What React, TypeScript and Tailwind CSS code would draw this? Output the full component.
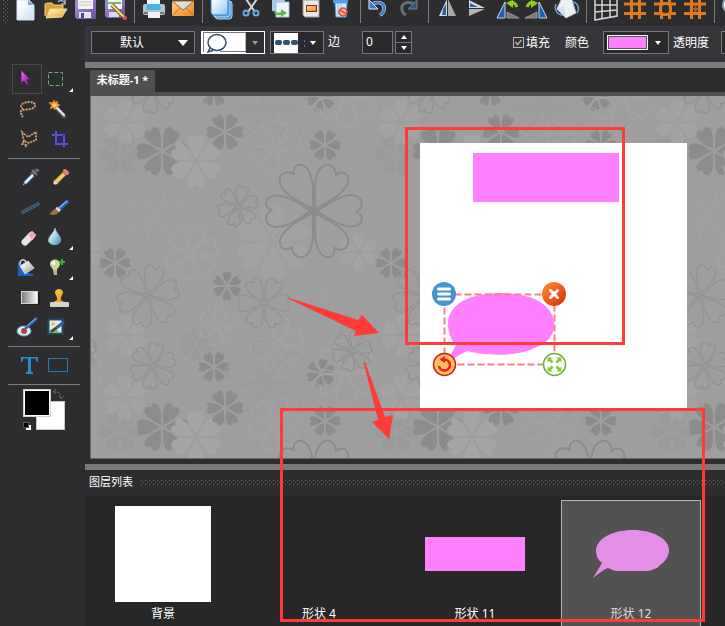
import { useState } from "react";
import type { ReactNode } from "react";

const FONT = "font-['Noto_Sans','Noto_Sans_CJK_SC',sans-serif]";

/* Gradients shared by all the icons */
function SharedDefs() {
  const ramps: [string, string, string][] = [
    ["paper", "#ffffff", "#c9dcf2"],
    ["folder", "#ffe9a8", "#dca23c"],
    ["floppy", "#9c86d0", "#6a4f9f"],
    ["silver", "#ffffff", "#8c8c8c"],
    ["sky", "#f4faff", "#8cc4f4"],
    ["orange", "#ffc070", "#e8852a"],
    ["red", "#ff7a2e", "#d42a08"],
    ["drop", "#f2fbff", "#3590b4"],
    ["stamp", "#ffc23e", "#e68a10"],
    ["purple", "#e05ae8", "#6d1080"],
  ];
  return (
    <svg className="absolute" width="0" height="0" aria-hidden="true">
      <defs>
        {ramps.map(([id, from, to]) => (
          <linearGradient key={id} id={id} x1="0" y1="0" x2="1" y2="1">
            <stop offset="0.2" stopColor={from} />
            <stop offset="1" stopColor={to} />
          </linearGradient>
        ))}
        <linearGradient id="ramp">
          <stop offset="0" stopColor="#777" />
          <stop offset="1" stopColor="#fff" />
        </linearGradient>
        <pattern id="grip" width="4" height="4" patternUnits="userSpaceOnUse">
          <rect width="1" height="1" fill="#626264" />
          <rect x="2" y="2" width="1" height="1" fill="#626264" />
        </pattern>
      </defs>
    </svg>
  );
}

/* === Top toolbar === */

const rotateLeft = (
  <>
    <path d="M4 18L12 2V18Z" fill="#1f5fb4" stroke="#c9d4e4" strokeWidth="1" />
    <path d="M14 18V12L26 18Z" fill="#777" stroke="#aaa" strokeWidth="0.8" />
    <path d="M24 7C22 2 18 1 16 4" fill="none" stroke="#8fcc1c" strokeWidth="3" />
    <path d="M13 3L20 0V8Z" fill="#8fcc1c" />
  </>
);

const hashBars = (
  <path
    d="M10.5 0V19M18.500 0V19M3 4H25M3 13.500H25"
    stroke="#e07a1e"
    strokeWidth="3"
    fill="none"
  />
);

const toolGroups: { label: string; icon: ReactNode }[][] = [
  [
    {
      label: "新建",
      icon: (
        <>
          <path d="M6 0H18L23 5V20H6Z" fill="url(#paper)" stroke="#d8e2ee" strokeWidth="1" />
          <path d="M17 0V5H23Z" fill="#7fa6d6" />
        </>
      ),
    },
    {
      label: "打开",
      icon: (
        <>
          <path d="M4 16V4L6 3H11L13 5H22V9" fill="#d9a13c" stroke="#f2cf7c" strokeWidth="1" />
          <path d="M5 18L9 9H26L21 17Z" fill="url(#folder)" stroke="#f6d78e" strokeWidth="1" />
          <path d="M17 2C19 0 22 0 24 3M24 0V4H20" fill="none" stroke="#a9b2bd" strokeWidth="1.5" />
        </>
      ),
    },
    {
      label: "保存",
      icon: (
        <>
          <path d="M4 0H25V19H6L4 17Z" fill="url(#floppy)" />
          <path d="M7 0H22V9H7Z" fill="#f5f5f5" />
          <path d="M8 2H21M8 5H21" stroke="#c4c4c4" />
          <path d="M8 12H20V18H8Z" fill="#e4e4ee" />
          <path d="M10 13H13V18H10Z" fill="#55408a" />
        </>
      ),
    },
    {
      label: "另存为",
      icon: (
        <>
          <path d="M4 0H24V18H6L4 16Z" fill="url(#floppy)" />
          <path d="M7 0H21V9H7Z" fill="#f5f5f5" />
          <path d="M7 3H20" stroke="#6fc05c" strokeWidth="2" />
          <path d="M8 12H18V17H8Z" fill="#dcdce8" />
          <path d="M11 5L24 18" stroke="#7b5c22" strokeWidth="4" />
          <path d="M11 5L24 18" stroke="#f6d98a" strokeWidth="2" />
          <circle cx="24" cy="18" r="2" fill="#d9534a" />
        </>
      ),
    },
  ],
  [
    {
      label: "打印",
      icon: (
        <>
          <path d="M8 0H21V5H8Z" fill="#f6f9fc" />
          <rect x="4" y="4" width="22" height="11" rx="2" fill="#b8c2cc" />
          <path d="M8 4H21L22 10H7Z" fill="#46b4e6" />
          <path d="M5 13H25" stroke="#6c7782" strokeWidth="2" />
          <path d="M9 12H21V18H9Z" fill="#eef2f6" />
        </>
      ),
    },
    {
      label: "邮件",
      icon: (
        <>
          <rect x="3" y="1" width="22" height="15" fill="url(#orange)" />
          <path d="M3 1L14 10L25 1Z" fill="#dedede" stroke="#b06a2c" strokeWidth="1" />
          <path d="M3 16L11 8M25 16L17 8" stroke="#cf6e20" strokeWidth="1" />
        </>
      ),
    },
  ],
  [
    {
      label: "复制",
      icon: (
        <>
          <rect x="8" y="1" width="17" height="18" rx="3" fill="#2d86d8" stroke="#b4dcfa" strokeWidth="1" />
          <rect x="6" y="0" width="17" height="17" rx="3" fill="#58a8ec" stroke="#b4dcfa" strokeWidth="1" />
          <rect x="4" y="-3" width="17" height="18" rx="3" fill="url(#sky)" stroke="#2f82cc" strokeWidth="1" />
        </>
      ),
    },
    {
      label: "剪切",
      icon: (
        <>
          <path d="M9 -1L18 12M20 -1L11 12" stroke="#cfd6de" strokeWidth="2" />
          <circle cx="9" cy="13" r="2.5" fill="none" stroke="#68a8dc" strokeWidth="2" />
          <circle cx="19" cy="13" r="2.5" fill="none" stroke="#68a8dc" strokeWidth="2" />
        </>
      ),
    },
    {
      label: "粘贴",
      icon: (
        <>
          <rect x="5" y="-4" width="13" height="15" fill="#a8cbe8" />
          <path d="M9 2H22V17H9Z" fill="#eef5fb" stroke="#a9c2d8" />
          <path d="M6 10C9 13 11 13 14 12V9L20 13L14 17V15C10 16 7 14 6 10Z" fill="#5fb84e" />
        </>
      ),
    },
    {
      label: "图像",
      icon: (
        <>
          <path d="M6 0H22V17H8L6 15Z" fill="#e8e8e8" stroke="#9b9b9b" />
          <rect x="9" y="5" width="11" height="7" fill="#7a3418" />
          <rect x="10" y="6" width="9" height="5" fill="url(#orange)" />
        </>
      ),
    },
    {
      label: "删除",
      icon: (
        <>
          <path d="M6 0H21V3H6Z" fill="#4d9ee2" />
          <path d="M8 3H20L19 17H9Z" fill="#d7ebfa" stroke="#5aa2dc" />
          <path d="M11 4V15M14 4V15" stroke="#8fbfe4" />
          <circle cx="16" cy="12" r="4" fill="#f2b0a0" stroke="#d84a3a" strokeWidth="1.5" />
          <path d="M13 10L19 14" stroke="#d84a3a" strokeWidth="1.5" />
        </>
      ),
    },
  ],
  [
    {
      label: "撤销",
      icon: (
        <>
          <path d="M6 5C12 0 20 3 19 9C19 12 17 14 15 15" fill="none" stroke="#dbe8f8" strokeWidth="3.500" />
          <path d="M6 5C12 0 20 3 19 9C19 12 17 14 15 15" fill="none" stroke="#3c78c8" strokeWidth="2.500" />
          <path d="M4 0V9H13Z" fill="#3c78c8" stroke="#dbe8f8" strokeWidth="1" />
        </>
      ),
    },
    {
      label: "重做",
      icon: (
        <>
          <path d="M20 5C14 0 6 3 7 9C7 12 9 14 11 15" fill="none" stroke="#62707c" strokeWidth="3" />
          <path d="M22 0V9H13Z" fill="#35597a" stroke="#6c7c8c" strokeWidth="1" />
        </>
      ),
    },
  ],
  [
    {
      label: "水平翻转",
      icon: (
        <>
          <path d="M14 -1V16H6Z" fill="#d8d8d8" />
          <path d="M10 9L13 4V15H9Z" fill="#2a60b0" />
          <path d="M15 -1V16H23Z" fill="#aaa" />
        </>
      ),
    },
    {
      label: "垂直翻转",
      icon: (
        <>
          <path d="M6 0V8H22Z" fill="#d8d8d8" />
          <path d="M7 3V7H15Z" fill="#2a60b0" />
          <path d="M6 16V9H22Z" fill="#b4b4b4" />
        </>
      ),
    },
    { label: "向左旋转", icon: rotateLeft },
    { label: "向右旋转", icon: <g transform="matrix(-1 0 0 1 28 0)">{rotateLeft}</g> },
    {
      label: "任意旋转",
      icon: (
        <>
          <path d="M3 4C1 9 4 15 10 15M24 13C27 9 25 3 20 2" fill="none" stroke="#6e9ed0" strokeWidth="1.500" />
          <path d="M8 0L18 -3L23 13L13 18L4 9Z" fill="#edf1f6" stroke="#b7c2cf" />
          <path d="M4 9L11 6L13 18" fill="#d3deea" />
        </>
      ),
    },
  ],
  [
    {
      label: "透视",
      icon: (
        <path
          d="M4 -1V20L26 16V-1M11 -1V18M19 -1V17M4 5H26M4 12L26 10"
          fill="none"
          stroke="#d2d2d2"
          strokeWidth="1.5"
        />
      ),
    },
    { label: "网格", icon: hashBars },
    {
      label: "参考线",
      icon: (
        <>
          {hashBars}
          <rect x="9.500" y="3.500" width="10" height="11" rx="4" fill="#2d2d2f" stroke="#e07a1e" strokeWidth="3" />
        </>
      ),
    },
    {
      label: "对齐",
      icon: (
        <>
          {hashBars}
          <path d="M11 9H18M14.500 5V12" stroke="#a8601f" strokeWidth="2" />
        </>
      ),
    },
  ],
  [
    {
      label: "缩放",
      icon: (
        <>
          <circle cx="12" cy="5" r="8" fill="#dfe9f4" stroke="#98a4b0" strokeWidth="2" />
          <path d="M18 11L24 18" stroke="#98a4b0" strokeWidth="3" />
        </>
      ),
    },
  ],
];

function MainToolbar() {
  return (
    <header className="flex h-[26px] items-start overflow-hidden bg-[#2d2d2f]">
      <svg className="ml-[3px] mr-[3px] shrink-0" width="5" height="23" aria-hidden="true">
        <rect width="5" height="23" fill="url(#grip)" />
      </svg>
      {toolGroups.map((group, i) => (
        <div key={i} className="flex shrink-0">
          {i > 0 && <div className="ml-[3px] mr-1 h-[23px] w-px bg-[#7b7b7b]" />}
          {group.map((tool) => (
            <button key={tool.label} type="button" aria-label={tool.label} className="h-6 w-[30px]">
              <svg viewBox="0 0 30 24" width="30" height="24">
                {tool.icon}
              </svg>
            </button>
          ))}
        </div>
      ))}
    </header>
  );
}

/* === Options bar === */

function Caret({ className = "", up = false }: { className?: string; up?: boolean }) {
  return (
    <svg className={className} width="6" height="4" viewBox="0 0 6 4" aria-hidden="true">
      <path d={up ? "M0 4L3 0L6 4Z" : "M0 0H6L3 4Z"} fill="currentColor" />
    </svg>
  );
}

function OptionsBar() {
  const [width, setWidth] = useState(0);
  const [fill, setFill] = useState(true);

  return (
    <div className="flex h-9 items-start overflow-hidden bg-[#36363a] pl-[6px] pt-[5px] text-xs leading-[23px] text-white">
      <div className="relative w-[104px] shrink-0">
        <select
          aria-label="预设"
          className="block h-[23px] w-full appearance-none border border-[#77777a] bg-[#2a2a2c] pl-7 text-xs leading-[21px] outline-none"
        >
          <option>默认</option>
        </select>
        <svg className="pointer-events-none absolute right-[7px] top-[9px]" width="10" height="6" aria-hidden="true">
          <path d="M0 0H10L5 6Z" fill="#fff" />
        </svg>
      </div>

      <button
        type="button"
        aria-label="形状"
        aria-haspopup="listbox"
        className="ml-[6px] flex h-[23px] w-[64px] shrink-0 border border-white bg-[#2f2f31] text-[#9a9a9a]"
      >
        <svg width="44" height="21" viewBox="0 0 44 21">
          <rect width="44" height="21" fill="#fff" />
          <path d="M1.500 20V.5H44V19.500H18" fill="none" stroke="#77777a" />
          <ellipse cx="15" cy="10.500" rx="9" ry="8" fill="#fff" stroke="#34506f" strokeWidth="1.500" />
          <path d="M8 16L5.500 21M6 20L11 18.500" stroke="#34506f" strokeWidth="1.500" />
        </svg>
        <Caret className="m-auto" />
      </button>

      <button
        type="button"
        aria-label="线型"
        aria-haspopup="listbox"
        className="ml-[5px] flex h-[23px] w-[54px] shrink-0 border border-[#77777a] bg-[#2a2a2c] text-white"
      >
        <svg width="37" height="21" viewBox="0 0 37 21">
          <rect x="3" y="1" width="24" height="20" fill="#fff" />
          <g fill="#34506f">
            <rect x="4" y="8" width="7" height="5" rx="2" />
            <rect x="12" y="8" width="7" height="5" rx="2" />
            <rect x="20" y="8" width="7" height="5" rx="2" />
          </g>
          <path d="M33.500 8V10M33.500 13V15" stroke="#2b7bd0" />
        </svg>
        <Caret className="ml-[2px] mt-[9px]" />
      </button>

      <label htmlFor="edge" className="ml-1 w-3 shrink-0 leading-[22px]">
        边
      </label>
      <input
        id="edge"
        value={width}
        onChange={(e) => setWidth(Number(e.target.value) || 0)}
        className="ml-[22px] h-[23px] w-[31px] shrink-0 border border-[#77777a] bg-[#2a2a2c] pl-[3px] pb-[2px] text-xs outline-none"
      />
      <div className="ml-[2px] grid h-[23px] w-[17px] shrink-0 grid-rows-2 border border-[#77777a] bg-[#2a2a2c]">
        <button
          type="button"
          aria-label="增加"
          onClick={() => setWidth(width + 1)}
          className="flex items-center justify-center border-b border-[#77777a]"
        >
          <Caret up />
        </button>
        <button
          type="button"
          aria-label="减少"
          onClick={() => setWidth(Math.max(0, width - 1))}
          className="flex items-center justify-center"
        >
          <Caret />
        </button>
      </div>

      <label className="ml-[101px] flex shrink-0 items-center gap-[2px]">
        <span className="relative flex size-[11px]">
          <input
            type="checkbox"
            checked={fill}
            onChange={(e) => setFill(e.target.checked)}
            className="peer size-[11px] appearance-none border border-[#b8b8b8] bg-[#36363a]"
          />
          <svg
            className="pointer-events-none absolute inset-0 hidden peer-checked:block"
            width="11"
            height="11"
            aria-hidden="true"
          >
            <path d="M2.5 5L4.5 7.5L8.5 3" fill="none" stroke="#b0b0b0" strokeWidth="1.5" />
          </svg>
        </span>
        填充
      </label>

      <span className="ml-[15px] w-6 shrink-0">颜色</span>
      <button
        type="button"
        aria-label="颜色"
        aria-haspopup="dialog"
        className="ml-[14px] flex h-[23px] w-[66px] shrink-0 items-center border border-[#77777a] bg-[#2a2a2c] pl-[3px]"
      >
        <span className="h-[15px] w-[41px] border border-white bg-[#ff80ff] outline outline-1 -outline-offset-2 outline-[#55555a]" />
        <Caret className="ml-[7px]" />
      </button>

      <label htmlFor="opacity" className="ml-1 w-9 shrink-0">
        透明度
      </label>
      <input
        id="opacity"
        className="ml-3 h-[23px] w-16 shrink-0 border border-[#77777a] bg-[#2a2a2c] outline-none"
      />
    </div>
  );
}

/* === Tool box === */

type Tool = { label: string; icon: ReactNode; flyout?: boolean };

const toolBox: Tool[][] = [
  [
    {
      label: "移动",
      icon: <path d="M9 6L9 19L12 17L15 22L17 21L15 16L18 15Z" fill="url(#purple)" stroke="#521060" strokeWidth="0.7" />,
    },
    {
      label: "选框",
      flyout: true,
      icon: <path d="M6.5 8.5H20.5V21.5H6.5Z" fill="none" stroke="#6cb46c" strokeDasharray="4 2" />,
    },
    {
      label: "套索",
      icon: (
        <g fill="none" strokeWidth="1.800">
          <path d="M11 15C6 12 11 8 17 8C25 8 25 14 18 15C15 16 11 15 9 17C7 20 12 20 10 23" stroke="#6d5238" />
          <path d="M11 15C6 12 11 8 17 8C25 8 25 14 18 15C15 16 11 15 9 17C7 20 12 20 10 23" stroke="#d6b08a" strokeDasharray="1.500 1.500" />
        </g>
      ),
    },
    {
      label: "魔棒",
      icon: (
        <>
          <path d="M14 13L22 22" stroke="#6a6a6a" strokeWidth="4" strokeLinecap="round" />
          <path d="M14 13L22 21" stroke="#ededed" strokeWidth="2" strokeLinecap="round" />
          <path d="M12 7L13 9L15 8L15 10L17 11L14 13L13 15L11 13L9 14L10 11L8 9L11 9Z" fill="#ffd79a" stroke="#ef8a1c" strokeWidth="1.500" />
        </>
      ),
    },
    {
      label: "多边形套索",
      icon: (
        <g fill="none" strokeWidth="1.600">
          <path d="M12 17L10 8L16 13L24 8V16L17 19L12 17L10 20L15 21L13 23" stroke="#6d5238" />
          <path d="M12 17L10 8L16 13L24 8V16L17 19L12 17L10 20L15 21L13 23" stroke="#d6b08a" strokeDasharray="1.500 1.500" />
        </g>
      ),
    },
    {
      label: "裁剪",
      icon: (
        <g fill="none">
          <path d="M14 7V20H26M10 11H22V23" stroke="#5a4fd4" strokeWidth="2" />
          <path d="M15 19L25 7" stroke="#2d1ce0" strokeWidth="1" />
        </g>
      ),
    },
  ],
  [
    {
      label: "吸管",
      icon: (
        <>
          <path d="M19 13L25 8" stroke="#55585c" strokeWidth="4" />
          <path d="M20 8L25 13M24 7L27 9" stroke="#84888c" strokeWidth="1.500" />
          <path d="M13 21L21 13" stroke="#3366a8" strokeWidth="4" />
          <path d="M13 21L21 13" stroke="#e4f2fc" strokeWidth="2.500" />
          <path d="M11 23L13 21" stroke="#5fa4d8" strokeWidth="1.500" />
        </>
      ),
    },
    {
      label: "铅笔",
      icon: (
        <>
          <path d="M14 20L23 11" stroke="#a36a1c" strokeWidth="5" />
          <path d="M14 20L22 12" stroke="#f8ca70" strokeWidth="3.500" />
          <path d="M23 9L25 11" stroke="#e87b80" strokeWidth="4" strokeLinecap="round" />
          <path d="M12 18L16 22L11 23Z" fill="#f5dfb8" />
          <path d="M11 21.500L13 22.500L11 23Z" fill="#222" />
        </>
      ),
    },
    {
      label: "直线",
      icon: (
        <>
          <path d="M11 20L26 12" stroke="#8c9cac" strokeWidth="3" strokeLinecap="round" />
          <path d="M11 20L26 12" stroke="#28506f" strokeWidth="2" strokeLinecap="round" />
        </>
      ),
    },
    {
      label: "画笔",
      icon: (
        <>
          <path d="M17 17L25 10" stroke="#2463b8" strokeWidth="4" strokeLinecap="round" />
          <path d="M17 16L25 9" stroke="#7fb4f0" strokeWidth="1.5" />
          <path d="M14 16L18 19" stroke="#e2e2e2" strokeWidth="3" />
          <path d="M7 22C10 21 10 17 14 17L17 20C15 23 11 24 7 22Z" fill="#9c7440" />
        </>
      ),
    },
    {
      label: "橡皮",
      icon: (
        <>
          <path d="M13 20L19 14" stroke="#e4e4e4" strokeWidth="7" strokeLinecap="round" />
          <path d="M17 12L20 10L23 13L20 17Z" fill="#ee98a6" stroke="#f4b4bc" strokeWidth="2" />
        </>
      ),
    },
    {
      label: "模糊",
      flyout: true,
      icon: <path d="M13 6C14 11 19 14 18.5 18.5C18 24 7 24 6.5 18.5C6.5 14 12 11 13 6Z" fill="url(#drop)" stroke="#8cc0d4" strokeWidth="0.8" />,
    },
    {
      label: "油漆桶",
      icon: (
        <>
          <path d="M6 8V24H21V22L11 20Z" fill="#1462cc" />
          <path d="M8 14L16 9L22 16L13 22Z" fill="url(#silver)" stroke="#d0d0d8" />
          <path d="M8 13C7 6 15 6 14 13" fill="none" stroke="#d8d8de" strokeWidth="1.500" />
        </>
      ),
    },
    {
      label: "减淡",
      flyout: true,
      icon: (
        <>
          <path d="M8 12C8 6 18 6 18 12C18 15 15 16 15 18H11C11 16 8 15 8 12Z" fill="#ccd69c" />
          <circle cx="11.500" cy="11" r="2" fill="#f8fae4" />
          <path d="M11 18H15V23H12Z" fill="#c0b184" />
          <path d="M20 7V13M17 10H23" stroke="#24b83c" strokeWidth="2" />
        </>
      ),
    },
    {
      label: "渐变",
      icon: (
        <>
          <rect x="10" y="10" width="18" height="13" fill="#1f1f20" />
          <rect x="9.500" y="9.500" width="16" height="12" fill="url(#ramp)" stroke="#d4d4d4" />
        </>
      ),
    },
    {
      label: "图章",
      icon: (
        <>
          <path d="M10 21L15 18C16 15 13 13 13 10C14 6 20 6 21 10C21 13 18 15 19 18L24 21Z" fill="url(#stamp)" />
          <rect x="8" y="20" width="19" height="5" rx="1" fill="#d8d4c8" />
        </>
      ),
    },
    {
      label: "红眼",
      icon: (
        <>
          <ellipse cx="12" cy="19" rx="7" ry="5" fill="#d9ecf8" stroke="#5f9cc8" />
          <circle cx="12" cy="19" r="3" fill="#c04030" />
          <path d="M14 16L24 7" stroke="#2f6cb4" strokeWidth="3" strokeLinecap="round" />
          <path d="M15 14L24 6" stroke="#90bce8" strokeWidth="1" />
        </>
      ),
    },
    {
      label: "修复",
      flyout: true,
      icon: (
        <>
          <rect x="6.500" y="7.500" width="14" height="14" fill="#e3eef4" stroke="#24486c" strokeWidth="2" />
          <circle cx="11" cy="12" r="2" fill="#f2c338" />
          <path d="M8 21V18L12 16L19 21Z" fill="#86bc5c" />
          <path d="M13 17L22 10" stroke="#2f5f94" strokeWidth="3" />
          <path d="M9 20L14 16" stroke="#38423a" strokeWidth="2.500" />
        </>
      ),
    },
  ],
  [
    {
      label: "文字",
      icon: (
        <path
          d="M9 7H26V12H25L23.500 8.500H19V21.500L21 22.500V24H14V22.500L16 21.500V8.500H11.500L10 12H9Z"
          fill="#2a8aca"
        />
      ),
    },
    {
      label: "矩形",
      icon: <rect x="6.500" y="8.500" width="19" height="13" fill="none" stroke="#1f7ab8" />,
    },
  ],
];

function ToolDivider() {
  return <div className="mb-[3px] ml-2 mr-[5px] mt-1 h-px bg-[#7b7b7b]" />;
}

function ToolBox() {
  const [active, setActive] = useState("移动");

  return (
    <aside className="w-[85px] shrink-0 bg-[#2d2d2f] pt-[38px]">
      {toolBox.map((group, i) => (
        <div key={i}>
          {i > 0 && <ToolDivider />}
          <div className="grid grid-cols-[30px_32px] pl-3">
            {group.map((tool) => (
              <button
                key={tool.label}
                type="button"
                aria-label={tool.label}
                aria-pressed={active === tool.label}
                onClick={() => setActive(tool.label)}
                className="relative h-[30px] border border-transparent aria-pressed:border-[#48484b]"
              >
                <svg className="-m-px" width="30" height="30" viewBox="0 0 30 30">
                  {tool.icon}
                </svg>
                {tool.flyout && (
                  <svg className="absolute bottom-0 -right-px" width="6" height="6" viewBox="0 0 6 6">
                    <path d="M5 1V5H1Z" fill="#fff" />
                  </svg>
                )}
              </button>
            ))}
          </div>
        </div>
      ))}
      <ToolDivider />
      <svg className="ml-[22px] mt-[2px]" width="48" height="44" viewBox="0 0 48 44" role="img" aria-label="前景色和背景色">
        <rect x="14.500" y="13.500" width="28" height="28" fill="#fff" stroke="#c8c8c8" />
        <rect x="1.500" y="1.500" width="27" height="27" fill="#000" stroke="#d0d0d0" />
        <rect x="2.500" y="2.500" width="25" height="25" fill="#000" stroke="#fff" />
        <path d="M32 4C37 3 39 6 39 10M34 1L31 4L34 6M37 8L39 11L42 8" fill="none" stroke="#707070" strokeDasharray="2 1" />
        <rect x="4" y="37" width="5" height="5" fill="#fff" />
        <rect x="1.500" y="34.500" width="5" height="5" fill="#000" stroke="#555" />
      </svg>
    </aside>
  );
}

/* === Work area === */

const TILE = 276;

const PETAL =
  "M0 0C-.08 -.2 -.37 -.5 -.33 -.78C-.3 -.98 -.1 -1.02 .02 -.84C.1 -1.02 .28 -.98 .32 -.8C.35 -.5 .1 -.2 0 0Z";

// x, y, radius, rotation, colour, outline width (0 = filled)
const flowers: [number, number, number, number, string, number][] = [
  [176, 11, 42, 0, "#999999", 1],
  [29, 59, 20, 30, "#9a9a9a", 0],
  [105, 248, 15, 0, "#9a9a9a", 0],
  [34, 26, 21, 0, "#a3a3a3", 0],
  [71, 55, 24, 30, "#8c8c8c", 0],
  [105, 65, 25, 0, "#a5a5a5", 0],
  [182, 146, 37, 0, "#a2a2a2", 0],
  [268, 156, 18, 0, "#a3a3a3", 0],
  [35, 239, 20, 0, "#a3a3a3", 0],
  [134, 36, 17, 30, "#8c8c8c", 0],
  [234, 49, 14, 30, "#8c8c8c", 0],
  [24, 167, 14, 30, "#8c8c8c", 0],
  [123, 271, 14, 30, "#8c8c8c", 0],
  [136, 190, 13, 0, "#8c8c8c", 0],
  [230, 277, 13, 10, "#8c8c8c", 0],
  [184, 52, 26, 12, "#a4a4a4", 1],
  [65, 120, 26, 0, "#a3a3a3", 1],
  [100, 157, 26, 15, "#a5a5a5", 1],
  [127, 230, 19, 10, "#a5a5a5", 1],
  [186, 248, 26, 10, "#a4a4a4", 1],
  [232, 199, 32, 20, "#a1a1a1", 1],
  [255, 276, 31, 0, "#a6a6a6", 1],
  [147, 110, 19, 15, "#8d8d8d", 1],
  [57, 200, 30, 15, "#8f8f8f", 1],
  [173, 207, 25, 30, "#8e8e8e", 1],
  [62, 270, 22, 10, "#8f8f8f", 1],
  [261, 255, 19, 15, "#8e8e8e", 1],
  [223, 115, 48, 30, "#8b8b8b", 2],
];

function Wallpaper() {
  return (
    <svg className="absolute inset-0 h-full w-full" aria-hidden="true">
      <defs>
        <g id="flowers">
          {flowers.map(([x, y, r, turn, color, line], i) => (
            <g key={i} transform={`translate(${x} ${y})`}>
              {[0, 60, 120, 180, 240, 300].map((angle) => (
                <path
                  key={angle}
                  d={PETAL}
                  transform={`rotate(${angle + turn}) translate(0 -2) scale(${r})`}
                  fill={line ? "none" : color}
                  stroke={line ? color : "none"}
                  strokeWidth={line / r}
                />
              ))}
            </g>
          ))}
        </g>
        <pattern id="floral" width={TILE} height={TILE} patternUnits="userSpaceOnUse">
          <rect width={TILE} height={TILE} fill="#9e9e9e" />
          {[-TILE, 0, TILE].map((x) =>
            [-TILE, 0, TILE].map((y) => <use key={`${x},${y}`} href="#flowers" x={x} y={y} />),
          )}
        </pattern>
      </defs>
      <rect width="100%" height="100%" fill="url(#floral)" />
    </svg>
  );
}

const scaleArrow = (
  <path d="M-7 -7H-2L-3.500 -5.500L-1 -3L-3 -1L-5.500 -3.500L-7 -2Z" fill="#8cc63f" />
);

function Artboard() {
  return (
    <svg
      className="absolute left-[329px] top-[47px] bg-white"
      width="267"
      height="265"
      viewBox="0 0 267 265"
      role="img"
      aria-label="画布"
    >
      <rect x="53" y="10" width="146" height="49" fill="#ff80ff" />
      <path
        d="M28 181C28 161 50 150 81 150C112 150 134 162 134 181C134 192 128 200 117 204C98 214 66 213 47 208C42 210 38 213 33 216L29 215L36 202C31 197 28 190 28 181Z"
        fill="#ff80ff"
      />
      <rect x="24.500" y="151.500" width="110" height="70" fill="none" stroke="#ff7c8a" strokeWidth="2" strokeDasharray="7 3" />

      <circle cx="24" cy="151" r="12" fill="#4696cc" />
      <path d="M18.500 146H29.500M18.500 151H29.500M18.500 156H29.500" stroke="#fff" strokeWidth="3" strokeLinecap="round" />

      <circle cx="134" cy="151" r="12" fill="url(#red)" />
      <path d="M130.500 147.500L137.500 154.500M137.500 147.500L130.500 154.500" stroke="#fff" strokeWidth="3" strokeLinecap="round" />

      <circle cx="24.500" cy="221.500" r="11" fill="#ffc062" stroke="#d42020" strokeWidth="1.500" />
      <path d="M24 216.500A5.500 5.500 0 1 1 19 223" fill="none" stroke="#ee1c1c" strokeWidth="2.500" />
      <path d="M19.500 216.500L25 213V220Z" fill="#ee1c1c" />

      <circle cx="134.500" cy="221.500" r="11" fill="#fff" stroke="#6fae3c" strokeWidth="1.500" />
      {[0, 90, 180, 270].map((angle) => (
        <g key={angle} transform={`translate(134.5 221.5) rotate(${angle})`}>
          {scaleArrow}
        </g>
      ))}
    </svg>
  );
}

function Workspace() {
  return (
    <main className="bg-[#2d2d2f] pb-[5px] pl-[5px]">
      <div className="flex pt-[2px]">
        <button
          type="button"
          className="h-[22px] w-[65px] bg-[#505050] pb-[2px] text-[11px] font-bold leading-5 text-white"
        >
          未标题-1 *
        </button>
      </div>
      <div className="h-1 bg-[#505050]" />
      <div className="relative h-[363px] overflow-hidden border-b border-l border-[#696969]">
        <Wallpaper />
        <Artboard />
      </div>
    </main>
  );
}

/* === Layer list === */

const layers: { name: string; preview: ReactNode }[] = [
  { name: "背景", preview: <rect x="2" width="96" height="96" fill="#fff" /> },
  { name: "形状 4", preview: null },
  { name: "形状 11", preview: <rect y="31" width="100" height="34" fill="#ff80ff" /> },
  {
    name: "形状 12",
    preview: (
      <path
        d="M15 45C15 33 31 24 52 24C72 24 88 33 88 44C88 50 84 56 79 59L76 62C71 64 69 65 65 65H37C33 65 30 63 27 62C22 64 17 68 12 72L21 57C17 54 15 50 15 45Z"
        fill="#e48fe6"
      />
    ),
  },
];

function LayerList() {
  const [selected, setSelected] = useState("形状 12");

  return (
    <section className="flex grow flex-col">
      <div className="flex h-[26px] items-center bg-[#2d2d2f] pb-[2px] pl-1">
        <h2 className="w-11 text-[11px] leading-4 text-white">图层列表</h2>
        <svg className="ml-2 h-[5px] grow" aria-hidden="true">
          <rect width="100%" height="5" fill="url(#grip)" />
        </svg>
      </div>
      <div className="flex grow gap-4 overflow-hidden bg-[#272727] pl-2 pt-1">
        {layers.map((layer) => (
          <button
            key={layer.name}
            type="button"
            aria-pressed={selected === layer.name}
            onClick={() => setSelected(layer.name)}
            className="flex w-[140px] shrink-0 flex-col items-center border border-b-0 border-transparent pt-[5px] text-xs text-white aria-pressed:border-[#b4b4b4] aria-pressed:bg-[#525252] aria-pressed:text-[#dedede]"
          >
            <svg width="100" height="96" viewBox="0 0 100 96" aria-hidden="true">
              {layer.preview}
            </svg>
            <span className="pt-[3px] leading-[18px]">{layer.name}</span>
          </button>
        ))}
      </div>
    </section>
  );
}

/* Red frames and arrows drawn over the editor */
function Annotations() {
  return (
    <svg className="pointer-events-none absolute left-0 top-0" width="725" height="626" aria-hidden="true">
      <g fill="none" stroke="#ff3b38" strokeWidth="3">
        <rect x="406.500" y="128.500" width="217" height="215" />
        <rect x="281.500" y="409.500" width="422" height="211" />
      </g>
      <g fill="#ff3b38">
        <path d="M287 298L288 297.500L358 320L362 315L379 333L354 336L356 331Z" />
        <path d="M363.500 362L365 362L385 417L393 415L389 439L372 422L378 420Z" />
      </g>
    </svg>
  );
}

export default function App() {
  return (
    <div className={`relative flex min-h-screen flex-col overflow-hidden bg-[#2d2d2f] ${FONT}`}>
      <SharedDefs />
      <MainToolbar />
      <div className="flex grow">
        <ToolBox />
        <div className="flex min-w-0 grow flex-col">
          <OptionsBar />
          <div className="h-[6px] bg-[#7b7b7b]" />
          <Workspace />
          <div className="h-[6px] bg-[#7b7b7b]" />
          <LayerList />
        </div>
      </div>
      <Annotations />
    </div>
  );
}
